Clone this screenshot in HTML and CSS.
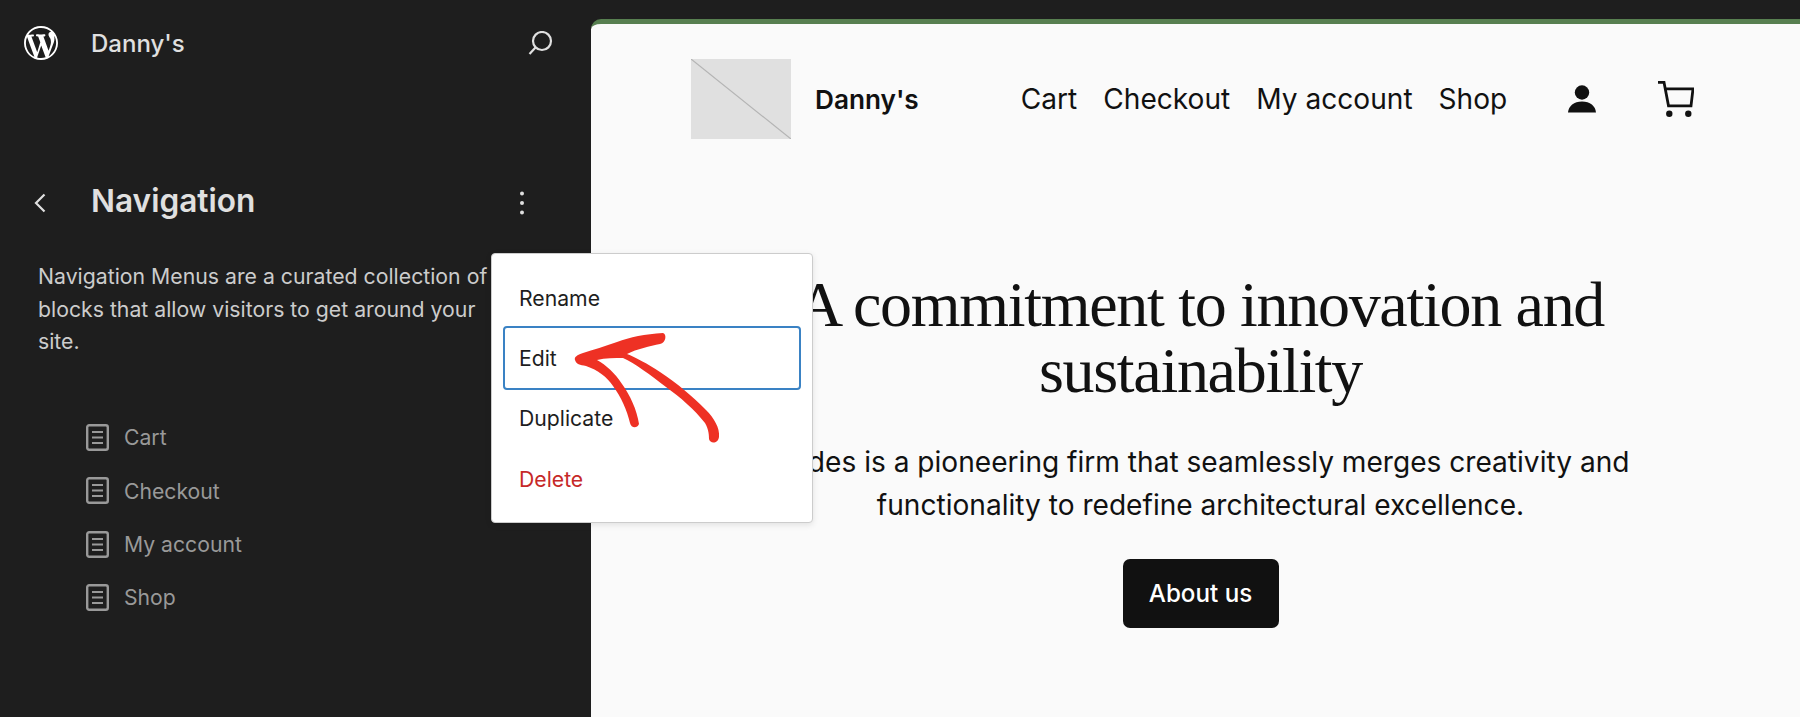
FILE: index.html
```html
<!DOCTYPE html>
<html lang="en">
<head>
<meta charset="utf-8">
<title>Navigation</title>
<link rel="stylesheet" href="styles.css">
</head>
<body>
<div class="app">
  <aside class="sidebar">
    <div class="site-bar">
      <svg class="wp-logo" viewBox="0 0 20 20"><path fill="#fff" d="M20 10c0-5.51-4.49-10-10-10C4.48 0 0 4.49 0 10c0 5.52 4.48 10 10 10 5.51 0 10-4.48 10-10zM7.78 15.37L4.37 6.22c.55-.02 1.17-.08 1.17-.08.5-.06.44-1.13-.06-1.11 0 0-1.45.11-2.37.11-.18 0-.37 0-.58-.01C4.12 2.69 6.87 1.11 10 1.11c2.33 0 4.45.87 6.05 2.34-.68-.11-1.65.39-1.65 1.58 0 .74.45 1.36.9 2.1.35.61.55 1.36.55 2.46 0 1.49-1.4 5-1.4 5l-3.03-8.37c.54-.02.82-.17.82-.17.5-.05.44-1.25-.06-1.22 0 0-1.44.12-2.38.12-.87 0-2.33-.12-2.33-.12-.5-.03-.56 1.2-.06 1.22l.92.08 1.26 3.41zM17.41 10c.24-.64.74-1.87.43-4.25.7 1.29 1.05 2.71 1.05 4.25 0 3.29-1.73 6.24-4.4 7.78.97-2.59 1.94-5.2 2.92-7.78zM6.1 18.09C3.12 16.65 1.11 13.53 1.11 10c0-1.3.23-2.48.72-3.59C3.25 10.3 4.67 14.2 6.1 18.09zm4.03-6.63l2.58 6.98c-.86.29-1.76.45-2.71.45-.79 0-1.57-.11-2.29-.33.81-2.38 1.62-4.74 2.42-7.1z"/></svg>
      <span class="site-name">Danny's</span>
      <svg class="search-icon" viewBox="0 0 25 24"><circle cx="14" cy="10" r="9" fill="none" stroke="#e0e0e0" stroke-width="2.200"/><path d="M7.500 16.500L1.500 23" stroke="#e0e0e0" stroke-width="2.200" fill="none"/></svg>
    </div>
    <div class="nav-title-row">
      <svg class="chevron" viewBox="0 0 12 20"><path d="M10.500 1.500L2 10l8.500 8.500" fill="none" stroke="#e0e0e0" stroke-width="2.200"/></svg>
      <h2 class="nav-title">Navigation</h2>
      <svg class="kebab" viewBox="0 0 6 24"><circle cx="3" cy="2.500" r="2" fill="#e0e0e0"/><circle cx="3" cy="12" r="2" fill="#e0e0e0"/><circle cx="3" cy="21.500" r="2" fill="#e0e0e0"/></svg>
    </div>
    <p class="description">Navigation Menus are a curated collection of blocks that allow visitors to get around your site.</p>
    <ul class="page-list">
      <li class="page-item"><svg class="page-icon" viewBox="0 0 23 27"><rect x="1.200" y="1.200" width="20.600" height="24.600" rx="2" fill="none" stroke="#999" stroke-width="2.400"/><path d="M6 8h11M6 13.500h11M6 19h11" stroke="#999" stroke-width="2.200"/></svg>Cart</li>
      <li class="page-item"><svg class="page-icon" viewBox="0 0 23 27"><rect x="1.200" y="1.200" width="20.600" height="24.600" rx="2" fill="none" stroke="#999" stroke-width="2.400"/><path d="M6 8h11M6 13.500h11M6 19h11" stroke="#999" stroke-width="2.200"/></svg>Checkout</li>
      <li class="page-item"><svg class="page-icon" viewBox="0 0 23 27"><rect x="1.200" y="1.200" width="20.600" height="24.600" rx="2" fill="none" stroke="#999" stroke-width="2.400"/><path d="M6 8h11M6 13.500h11M6 19h11" stroke="#999" stroke-width="2.200"/></svg>My account</li>
      <li class="page-item"><svg class="page-icon" viewBox="0 0 23 27"><rect x="1.200" y="1.200" width="20.600" height="24.600" rx="2" fill="none" stroke="#999" stroke-width="2.400"/><path d="M6 8h11M6 13.500h11M6 19h11" stroke="#999" stroke-width="2.200"/></svg>Shop</li>
    </ul>
  </aside>
  <main class="preview">
    <header class="site-header">
      <svg class="placeholder-logo" viewBox="0 0 100 80" preserveAspectRatio="none"><rect width="100" height="80" fill="#e0e0e0"/><path d="M0 0L100 80" stroke="#b4b4b4" stroke-width="1.200"/></svg>
      <span class="header-title">Danny's</span>
      <nav class="header-nav"><span>Cart</span><span>Checkout</span><span>My account</span><span>Shop</span></nav>
      <svg class="user-icon" viewBox="0 0 28 28"><circle cx="14" cy="7.500" r="7.200" fill="#111"/><path d="M0 27.500C.5 21 6 16.500 14 16.500S27.500 21 28 27.500z" fill="#111"/></svg>
      <svg class="cart-icon" viewBox="0 0 36 37"><path d="M0 1.300h6l4.500 23.500h22.500l2-17H7" fill="none" stroke="#111" stroke-width="2.800"/><circle cx="11.300" cy="32.700" r="3.200" fill="#111"/><circle cx="30.300" cy="32.700" r="3.200" fill="#111"/></svg>
    </header>
    <section class="hero">
      <h1 class="hero-title">A commitment to innovation and sustainability</h1>
      <p class="hero-text">Cades is a pioneering firm that seamlessly merges creativity and functionality to redefine architectural excellence.</p>
      <a class="hero-button">About us</a>
    </section>
  </main>
</div>
<div class="menu">
  <div class="menu-item">Rename</div>
  <div class="menu-item is-focused">Edit</div>
  <div class="menu-item">Duplicate</div>
  <div class="menu-item is-danger">Delete</div>
</div>
<svg class="arrow" viewBox="0 0 360 300">
  <path fill="#ee3124" d="M183 93C165 94 150 97 137 102C125 106 113 110 103 113C97 115 94 117 95 120C96 124 100 125 106 126C118 130 127 137 133 146C141 157 147 170 150 183C151 188 157 189 159 184C157 170 150 155 142 144C135 133 126 125 117 120C125 118 135 118 143 118C155 123 170 135 186 147C200 157 215 170 225 183C229 190 229 196 229 199C230 204 238 204 239 197C240 188 234 178 226 170C212 156 198 144 180 132C168 124 155 117 147 114C157 109 170 106 180 104C186 103 187 94 183 93Z"/>
</svg>
</body>
</html>
```
FILE: styles.css
```css
* { box-sizing: border-box; }
html, body { margin: 0; height: 717px; overflow: hidden; background: #1e1e1e; }
body { position: relative; font-family: Inter, "Liberation Sans", sans-serif; }
.app { display: flex; width: 1800px; height: 717px; }

.sidebar { width: 591px; flex: none; color: #e0e0e0; }
.site-bar { display: flex; align-items: center; height: 34px; margin: 26px 38px 0 24px; }
.wp-logo { width: 34px; height: 34px; flex: none; }
.site-name { margin-left: 33px; font-size: 24px; font-weight: 500; }
.search-icon { width: 25px; height: 24px; margin-left: auto; }
.nav-title-row { display: flex; align-items: center; height: 44px; margin: 119px 0 0 34px; }
.chevron { width: 12px; height: 20px; flex: none; margin-top: 3px; }
.nav-title { margin: 0 0 0 45px; font-size: 31.600px; font-weight: 600; line-height: 44px; }
.kebab { width: 6px; height: 24px; margin: 3px 0 0 264px; }
.description { width: 460px; margin: 37px 0 0 38px; font-size: 21.250px; line-height: 32.600px; color: #ccc; }
.page-list { list-style: none; margin: 53px 0 0 86px; padding: 0; }
.page-item { display: flex; align-items: center; height: 53.300px; gap: 15px; font-size: 21.200px; color: #999; }
.page-icon { width: 23px; height: 27px; flex: none; }

.preview { flex: 1; min-width: 0; margin-top: 19px; background: #fafafa; border-top: 5px solid #577f50; border-top-left-radius: 10px; color: #111; }
.site-header { display: flex; align-items: center; height: 80px; margin-top: 35px; padding-left: 100px; }
.placeholder-logo { width: 100px; height: 80px; flex: none; }
.header-title { margin-left: 24px; font-size: 26.200px; font-weight: 600; }
.header-nav { display: flex; gap: 26px; margin-left: 102px; font-size: 28.100px; }
.user-icon { width: 28px; height: 28px; margin-left: 61px; }
.cart-icon { width: 36px; height: 37px; margin-left: 62px; }
.hero { display: flex; flex-direction: column; align-items: center; padding: 0 90px 0 100px; text-align: center; }
.hero-title { width: 880px; margin: 133px 0 0; font-family: "Liberation Serif", serif; font-size: 64px; font-weight: 400; line-height: 65.500px; letter-spacing: -1.300px; }
.hero-text { width: 880px; margin: 38px 0 0; font-size: 28.100px; line-height: 43px; }
.hero-button { display: flex; align-items: center; justify-content: center; width: 156px; height: 69px; margin-top: 32px; border-radius: 7px; background: #111; color: #fff; font-size: 24.200px; font-weight: 500; }

.menu { position: absolute; left: 491px; top: 253px; width: 322px; height: 270px; padding: 14px 12px; background: #fff; border: 1px solid #ccc; border-radius: 4px; box-shadow: 0 2px 6px rgba(0,0,0,.1); }
.menu-item { display: flex; align-items: center; height: 60px; padding-left: 15px; font-size: 21.200px; color: #1e1e1e; }
.is-focused { height: 64px; margin: -2px -1px; border: 2px solid #3a82c4; border-radius: 4px; padding-left: 14px; }
.is-danger { color: #c62828; padding-top: 2px; }
.arrow { position: absolute; left: 480px; top: 240px; width: 360px; height: 300px; pointer-events: none; }
```
